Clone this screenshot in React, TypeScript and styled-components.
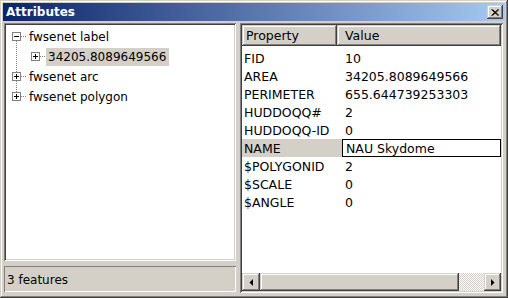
import React from 'react'
import styled, { createGlobalStyle, css } from 'styled-components'

const face = '#d4d0c8'
const shadow = '#808080'
const dark = '#404040'

const GlobalStyle = createGlobalStyle`
  html, body {
    margin: 0;
    padding: 0;
    background: ${face};
  }
  * {
    box-sizing: border-box;
  }
`

const raised = css`
  background: ${face};
  box-shadow: inset -1px -1px ${dark}, inset 1px 1px ${face}, inset -2px -2px ${shadow}, inset 2px 2px #fff;
`

const sunken = css`
  box-shadow: inset 1px 1px ${shadow}, inset -1px -1px #fff, inset 2px 2px ${dark}, inset -2px -2px ${face};
`

const Window = styled.div`
  width: 508px;
  height: 298px;
  padding: 3px;
  display: flex;
  flex-direction: column;
  background: ${face};
  box-shadow: inset -1px -1px ${dark}, inset 1px 1px ${face}, inset -2px -2px ${shadow}, inset 2px 2px #fff;
  font-family: 'DejaVu Sans', Verdana, sans-serif;
  font-size: 12px;
  color: #000;
`

const TitleBar = styled.div`
  height: 18px;
  display: flex;
  align-items: center;
  justify-content: space-between;
  padding: 0 2px 0 3px;
  background: linear-gradient(to right, #0a246a, #a6caf0);
`

const Title = styled.span`
  color: #fff;
  font-weight: bold;
  font-size: 12px;
`

const CloseButton = styled.div`
  ${raised};
  width: 16px;
  height: 14px;
  display: flex;
  align-items: center;
  justify-content: center;
`

const Body = styled.div`
  flex: 1;
  display: flex;
  margin: 2px 2px 2px 1px;
  min-height: 0;
`

const LeftPane = styled.div`
  width: 232px;
  display: flex;
  flex-direction: column;
`

const TreeBox = styled.div`
  ${sunken};
  flex: 1;
  background: #fff;
  padding: 4px 2px 2px 4px;
`

const TreeRow = styled.div`
  height: 20px;
  display: flex;
  align-items: center;
`

const TreeLabel = styled.span<{ $selected?: boolean }>`
  height: 18px;
  line-height: 18px;
  padding: 0 3px 0 2px;
  white-space: nowrap;
  background: ${(p) => (p.$selected ? face : 'transparent')};
`

const StatusBar = styled.div`
  height: 26px;
  margin: 5px 0 1px;
  padding: 1px 3px 0;
  display: flex;
  align-items: center;
  box-shadow: inset 1px 1px ${shadow}, inset -1px -1px #fff;
`

const Splitter = styled.div`
  width: 4px;
`

const RightPane = styled.div`
  ${sunken};
  flex: 1;
  display: flex;
  flex-direction: column;
  padding: 2px;
  background: #fff;
  font-size: 12.5px;
`

const Table = styled.div`
  flex: 1;
`

const HeaderRow = styled.div`
  display: flex;
  height: 21px;
  margin-bottom: 3px;
`

const HeaderCell = styled.div<{ $width?: number }>`
  ${raised};
  ${(p) => (p.$width ? `width: ${p.$width}px;` : 'flex: 1;')}
  display: flex;
  align-items: center;
  padding-left: ${(p) => (p.$width ? 4 : 8)}px;
`

const Row = styled.div`
  display: flex;
  height: 18px;
  align-items: center;
`

const PropCell = styled.div<{ $selected?: boolean }>`
  width: 100px;
  height: 100%;
  padding-left: 2px;
  display: flex;
  align-items: center;
  white-space: nowrap;
  background: ${(p) => (p.$selected ? face : 'transparent')};
`

const ValueCell = styled.div`
  flex: 1;
  padding-left: 3px;
  white-space: nowrap;
`

const EditBox = styled.div`
  flex: 1;
  height: 18px;
  border: 1px solid #000;
  padding-left: 3px;
  display: flex;
  align-items: center;
  background: #fff;
`

const ScrollBar = styled.div`
  height: 18px;
  display: flex;
`

const ScrollButton = styled.div<{ $width: number }>`
  ${raised};
  width: ${(p) => p.$width}px;
  display: flex;
  align-items: center;
  justify-content: center;
`

const Thumb = styled.div`
  ${raised};
  width: 199px;
`

const Track = styled.div`
  flex: 1;
  background: repeating-conic-gradient(#fff 0 25%, ${face} 0 50%) 0 0 / 2px 2px;
`

type GutterProps = { up?: boolean; down?: boolean; horiz?: boolean; box?: 'plus' | 'minus' }

function Gutter({ up, down, horiz, box }: GutterProps) {
  return (
    <svg width="19" height="20" viewBox="0 0 19 20" style={{ flex: 'none' }}>
      {(up || down) && (
        <line x1="8.5" x2="8.5" y1={up ? 0 : 10} y2={down ? 20 : 10} stroke={shadow} strokeDasharray="1 1" />
      )}
      {horiz && <line x1="9" x2="19" y1="9.5" y2="9.5" stroke={shadow} strokeDasharray="1 1" />}
      {box && (
        <g>
          <rect x="4.5" y="5.5" width="8" height="8" fill="#fff" stroke={shadow} />
          <line x1="6" x2="11" y1="9.5" y2="9.5" stroke="#000" />
          {box === 'plus' && <line x1="8.5" x2="8.5" y1="7" y2="12" stroke="#000" />}
        </g>
      )}
    </svg>
  )
}

function Arrow({ dir }: { dir: 'left' | 'right' }) {
  return (
    <svg width="4" height="7" viewBox="0 0 4 7">
      <polygon points={dir === 'left' ? '4,0 4,7 0.5,3.5' : '0,0 0,7 3.5,3.5'} fill="#000" />
    </svg>
  )
}

const attributes: [string, string][] = [
  ['FID', '10'],
  ['AREA', '34205.8089649566'],
  ['PERIMETER', '655.644739253303'],
  ['HUDDOQQ#', '2'],
  ['HUDDOQQ-ID', '0'],
  ['NAME', 'NAU Skydome'],
  ['$POLYGONID', '2'],
  ['$SCALE', '0'],
  ['$ANGLE', '0'],
]

export default function App() {
  return (
    <>
      <GlobalStyle />
      <Window>
        <TitleBar>
          <Title>Attributes</Title>
          <CloseButton>
            <svg width="8" height="7" viewBox="0 0 8 7">
              <path d="M0.5 0.5 L7 6.5 M1.5 0.5 L8 6.5 M7 0.5 L0.5 6.5 M8 0.5 L1.5 6.5" stroke="#000" strokeWidth="1" />
            </svg>
          </CloseButton>
        </TitleBar>
        <Body>
          <LeftPane>
            <TreeBox>
              <TreeRow>
                <Gutter down horiz box="minus" />
                <TreeLabel>fwsenet label</TreeLabel>
              </TreeRow>
              <TreeRow>
                <Gutter up down />
                <Gutter horiz box="plus" />
                <TreeLabel $selected>34205.8089649566</TreeLabel>
              </TreeRow>
              <TreeRow>
                <Gutter up down horiz box="plus" />
                <TreeLabel>fwsenet arc</TreeLabel>
              </TreeRow>
              <TreeRow>
                <Gutter up horiz box="plus" />
                <TreeLabel>fwsenet polygon</TreeLabel>
              </TreeRow>
            </TreeBox>
            <StatusBar>3 features</StatusBar>
          </LeftPane>
          <Splitter />
          <RightPane>
            <Table>
              <HeaderRow>
                <HeaderCell $width={95}>Property</HeaderCell>
                <HeaderCell>Value</HeaderCell>
              </HeaderRow>
              {attributes.map(([name, value]) => {
                const editing = name === 'NAME'
                return (
                  <Row key={name}>
                    <PropCell $selected={editing}>{name}</PropCell>
                    {editing ? <EditBox>{value}</EditBox> : <ValueCell>{value}</ValueCell>}
                  </Row>
                )
              })}
            </Table>
            <ScrollBar>
              <ScrollButton $width={18}>
                <Arrow dir="left" />
              </ScrollButton>
              <Thumb />
              <Track />
              <ScrollButton $width={17}>
                <Arrow dir="right" />
              </ScrollButton>
            </ScrollBar>
          </RightPane>
        </Body>
      </Window>
    </>
  )
}
